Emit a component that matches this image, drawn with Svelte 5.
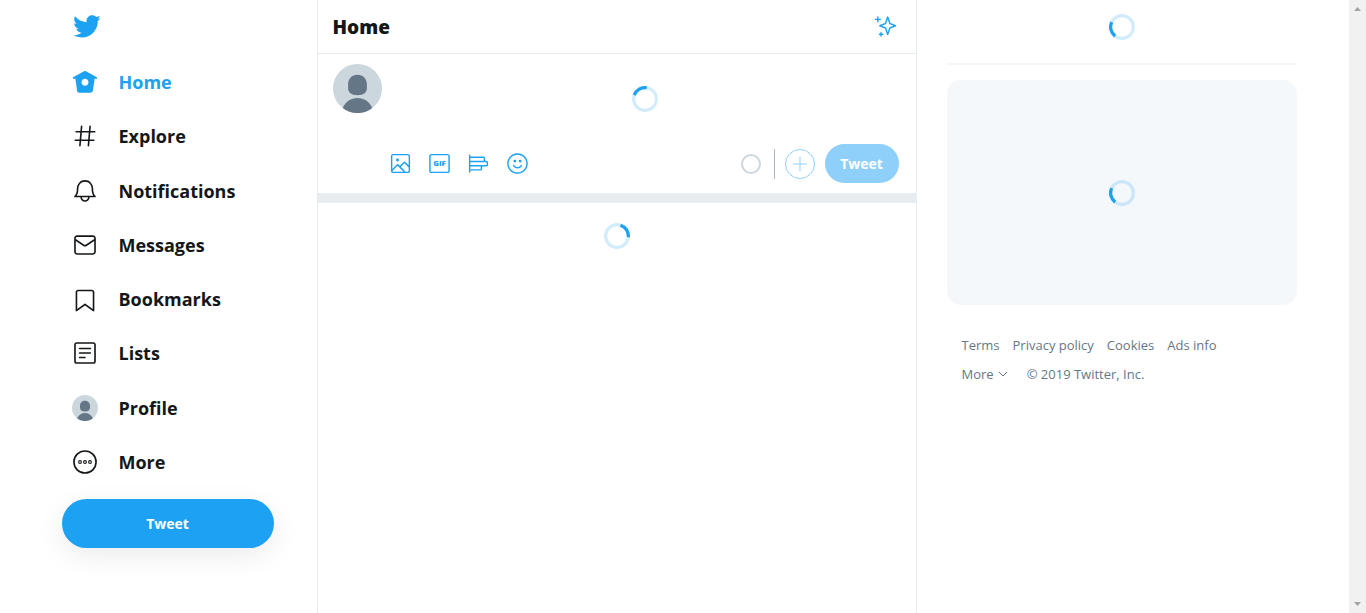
<script>
  const nav = [
    { label: 'Home', active: true, paths: ['M22.58 7.35L12.475 1.897c-.297-.16-.654-.16-.95 0L1.425 7.35c-.486.264-.667.87-.405 1.356.18.335.525.525.88.525.16 0 .324-.038.475-.12l.734-.396 1.59 11.25c.216 1.214 1.31 2.062 2.66 2.062h9.282c1.35 0 2.444-.848 2.662-2.088l1.588-11.225.737.398c.485.263 1.092.082 1.354-.404.263-.486.08-1.093-.404-1.355zM12 15.435c-1.795 0-3.25-1.455-3.25-3.25s1.455-3.25 3.25-3.25 3.25 1.455 3.25 3.25-1.455 3.25-3.25 3.25z'] },
    { label: 'Explore', paths: ['M21 7.337h-3.93l.372-4.272c.036-.412-.27-.775-.682-.812-.417-.03-.776.27-.812.683l-.383 4.4h-6.32l.37-4.27c.037-.413-.27-.776-.68-.813-.42-.03-.777.27-.813.683l-.382 4.4H3.782c-.414 0-.75.337-.75.75s.336.75.75.75H7.61l-.55 6.327H3c-.414 0-.75.336-.75.75s.336.75.75.75h3.93l-.372 4.272c-.036.412.27.775.682.812l.066.003c.385 0 .712-.295.746-.686l.383-4.4h6.32l-.37 4.27c-.036.413.27.776.682.813l.066.003c.385 0 .712-.295.746-.686l.382-4.4h3.957c.413 0 .75-.337.75-.75s-.337-.75-.75-.75H16.39l.55-6.327H21c.414 0 .75-.336.75-.75s-.336-.75-.75-.75zm-6.115 7.826h-6.32l.55-6.326h6.32l-.55 6.326z'] },
    { label: 'Notifications', paths: ['M21.697 16.468c-.02-.016-2.14-1.64-2.103-6.03.02-2.532-.812-4.782-2.347-6.335C15.872 2.71 14.01 1.94 12.005 1.93h-.013c-2.004.01-3.866.78-5.242 2.174-1.534 1.553-2.368 3.802-2.346 6.334.037 4.33-2.02 5.967-2.102 6.03-.26.193-.366.53-.265.838.102.308.39.515.712.515h4.92c.102 2.31 1.997 4.16 4.33 4.16s4.226-1.85 4.327-4.16h4.922c.322 0 .61-.206.71-.514.103-.307-.003-.645-.263-.838zM12 20.478c-1.505 0-2.73-1.177-2.828-2.658h5.656c-.1 1.48-1.323 2.66-2.828 2.66zM4.38 16.32c.74-1.132 1.548-3.028 1.524-5.896-.018-2.16.644-3.982 1.913-5.267C8.91 4.05 10.397 3.437 12 3.43c1.603.008 3.087.62 4.18 1.728 1.27 1.285 1.933 3.106 1.915 5.267-.024 2.868.785 4.765 1.525 5.896H4.38z'] },
    { label: 'Messages', paths: ['M19.25 3.018H4.75C3.233 3.018 2 4.252 2 5.77v12.495c0 1.518 1.233 2.753 2.75 2.753h14.5c1.517 0 2.75-1.235 2.75-2.753V5.77c0-1.518-1.233-2.752-2.75-2.752zm-14.5 1.5h14.5c.69 0 1.25.56 1.25 1.25v.714l-8.05 5.367c-.273.18-.626.182-.9-.002L3.5 6.482v-.714c0-.69.56-1.25 1.25-1.25zm14.5 14.998H4.75c-.69 0-1.25-.56-1.25-1.25V8.24l7.24 4.83c.383.256.822.384 1.26.384.44 0 .877-.128 1.26-.383l7.24-4.83v10.022c0 .69-.56 1.25-1.25 1.25z'] },
    { label: 'Bookmarks', paths: ['M19.9 23.5c-.157 0-.312-.05-.442-.144L12 17.928l-7.458 5.43c-.228.164-.53.19-.782.06-.25-.127-.41-.385-.41-.667V5.6c0-1.24 1.01-2.25 2.25-2.25h12.798c1.24 0 2.25 1.01 2.25 2.25v17.15c0 .282-.158.54-.41.668-.106.055-.223.082-.34.082zM12 16.25c.155 0 .31.048.44.144l6.71 4.883V5.6c0-.412-.337-.75-.75-.75H5.6c-.413 0-.75.338-.75.75v15.677l6.71-4.883c.13-.096.285-.144.44-.144z'] },
    { label: 'Lists', paths: ['M19.75 22H4.25C3.01 22 2 20.99 2 19.75V4.25C2 3.01 3.01 2 4.25 2h15.5C20.99 2 22 3.01 22 4.25v15.5c0 1.24-1.01 2.25-2.25 2.25zM4.25 3.5c-.414 0-.75.337-.75.75v15.5c0 .413.336.75.75.75h15.5c.414 0 .75-.337.75-.75V4.25c0-.413-.336-.75-.75-.75H4.25z', 'M17 8.64H7c-.414 0-.75-.337-.75-.75s.336-.75.75-.75h10c.414 0 .75.335.75.75s-.336.75-.75.75zm0 4.11H7c-.414 0-.75-.336-.75-.75s.336-.75.75-.75h10c.414 0 .75.336.75.75s-.336.75-.75.75zm-5 4.11H7c-.414 0-.75-.335-.75-.75s.336-.75.75-.75h5c.414 0 .75.337.75.75s-.336.75-.75.75z'] },
    { label: 'Profile', avatar: true },
    { label: 'More', more: true },
  ];

  const tools = [
    { name: 'Add photos', dots: [[8.868, 8.309, 1.542]], paths: ['M19.75 2H4.25C3.01 2 2 3.01 2 4.25v15.5C2 20.99 3.01 22 4.25 22h15.5c1.24 0 2.25-1.01 2.25-2.25V4.25C22 3.01 20.99 2 19.75 2zM4.25 3.5h15.5c.413 0 .75.337.75.75v9.676l-3.858-3.858c-.14-.14-.33-.22-.53-.22h-.003c-.2 0-.393.08-.532.224l-4.317 4.384-1.813-1.806c-.14-.14-.33-.22-.53-.22-.193-.03-.395.08-.535.227L3.5 17.642V4.25c0-.413.337-.75.75-.75zm-.744 16.28l5.418-5.534 6.282 6.254H4.25c-.402 0-.727-.322-.744-.72zm16.244.72h-2.42l-5.007-4.987 3.792-3.85 4.385 4.384v3.703c0 .413-.337.75-.75.75z'] },
    { name: 'Add a GIF', text: 'GIF', dots: [], paths: ['M20.5 2.02h-17c-1.24 0-2.25 1.007-2.25 2.247v15.507c0 1.238 1.01 2.246 2.25 2.246h17c1.24 0 2.25-1.008 2.25-2.246V4.267c0-1.24-1.01-2.247-2.25-2.247zm.75 17.754c0 .41-.336.746-.75.746h-17c-.414 0-.75-.336-.75-.746V4.267c0-.412.336-.747.75-.747h17c.414 0 .75.335.75.747v15.507z'] },
    { name: 'Add poll', dots: [], paths: ['M20.222 9.16h-1.334c.015-.09.028-.182.028-.277V6.57c0-.98-.797-1.777-1.778-1.777H3.5V3.358c0-.414-.336-.75-.75-.75s-.75.336-.75.75V20.83c0 .415.336.75.75.75s.75-.335.75-.75v-1.434h10.556c.98 0 1.778-.797 1.778-1.777v-2.313c0-.095-.014-.187-.028-.278h4.417c.98 0 1.778-.798 1.778-1.778v-2.31c0-.983-.797-1.78-1.778-1.78zM17.14 6.293c.152 0 .277.124.277.277v2.31c0 .154-.125.28-.278.28H3.5V6.29h13.64zm-2.807 9.014v2.312c0 .153-.125.277-.278.277H3.5v-2.868h10.556c.153 0 .277.126.277.28zM20.5 13.25c0 .153-.125.277-.278.277H3.5V10.66h16.722c.153 0 .278.124.278.277v2.313z'] },
    { name: 'Add emoji', dots: [[14.738, 9.458, 1.478], [9.262, 9.458, 1.478]], paths: ['M12 22.75C6.072 22.75 1.25 17.928 1.25 12S6.072 1.25 12 1.25 22.75 6.072 22.75 12 17.928 22.75 12 22.75zm0-20C6.9 2.75 2.75 6.9 2.75 12S6.9 21.25 12 21.25s9.25-4.15 9.25-9.25S17.1 2.75 12 2.75z', 'M12 17.115c-1.892 0-3.633-.95-4.656-2.544-.224-.348-.123-.81.226-1.035.348-.226.812-.124 1.036.226.747 1.162 2.016 1.855 3.395 1.855s2.648-.693 3.396-1.854c.224-.35.688-.45 1.036-.225.35.224.45.688.226 1.036-1.025 1.594-2.766 2.545-4.658 2.545z'] },
  ];

  const links = ['Terms', 'Privacy policy', 'Cookies', 'Ads info'];
</script>

{#snippet spinner(angle)}
  <svg class="spinner" viewBox="0 0 32 32" role="progressbar" aria-label="Loading">
    <circle cx="16" cy="16" r="14" opacity="0.2" />
    <circle cx="16" cy="16" r="14" stroke-dasharray="19 100" transform="rotate({angle} 16 16)" />
  </svg>
{/snippet}

{#snippet avatar()}
  <svg class="avatar" viewBox="0 0 48 48" aria-hidden="true">
    <circle cx="24" cy="24" r="24" fill="#ccd6dd" />
    <path d="M24 10.500c5.500 0 9.200 4 9.200 9.500v3.500c0 4.500-3 7-9.200 7s-9.200-2.500-9.200-7V20c0-5.500 3.700-9.500 9.200-9.500zM24 33.200c6.500 0 11.700 3.500 14.500 10A24 24 0 0 1 9.500 43.200c2.800-6.500 8-10 14.500-10z" fill="#657786" />
  </svg>
{/snippet}

<div class="page">
  <div class="shell">
    <header>
      <a class="logo" href="#home" aria-label="Twitter">
        <svg viewBox="0 0 24 24"><path d="M23.643 4.937c-.835.37-1.732.62-2.675.733.962-.576 1.7-1.49 2.048-2.578-.9.534-1.897.922-2.958 1.13-.85-.904-2.06-1.47-3.4-1.47-2.572 0-4.658 2.086-4.658 4.66 0 .364.042.718.12 1.06-3.873-.195-7.304-2.05-9.602-4.868-.4.69-.63 1.49-.63 2.342 0 1.616.823 3.043 2.072 3.878-.764-.025-1.482-.234-2.11-.583v.06c0 2.257 1.605 4.14 3.737 4.568-.392.106-.803.162-1.227.162-.3 0-.593-.028-.877-.082.593 1.85 2.313 3.198 4.352 3.234-1.595 1.25-3.604 1.995-5.786 1.995-.376 0-.747-.022-1.112-.065 2.062 1.323 4.51 2.093 7.14 2.093 8.57 0 13.255-7.098 13.255-13.254 0-.2-.005-.402-.014-.602.91-.658 1.7-1.477 2.323-2.41z" /></svg>
      </a>
      <nav>
        {#each nav as item}
          <a href="#{item.label.toLowerCase()}" class:active={item.active}>
            {#if item.avatar}
              {@render avatar()}
            {:else if item.more}
              <svg viewBox="0 0 24 24" aria-hidden="true">
                <circle class="line" cx="12" cy="12" r="10.2" />
                <circle class="line thin" cx="7.4" cy="12" r="1.3" />
                <circle class="line thin" cx="12" cy="12" r="1.3" />
                <circle class="line thin" cx="16.6" cy="12" r="1.3" />
              </svg>
            {:else}
              <svg viewBox="0 0 24 24" aria-hidden="true">
                {#each item.paths as d}<path {d} />{/each}
              </svg>
            {/if}
            <span>{item.label}</span>
          </a>
        {/each}
      </nav>
      <button class="tweet wide">Tweet</button>
    </header>

    <main>
      <div class="title">
        <h1>Home</h1>
        <button class="sparkle" aria-label="Top Tweets">
          <svg viewBox="0 0 24 24"><path d="M22.772 10.506l-5.618-2.192-2.16-6.5c-.102-.307-.39-.514-.712-.514s-.61.207-.712.513l-2.16 6.5-5.62 2.192c-.287.112-.477.39-.477.7s.19.585.478.698l5.62 2.192 2.16 6.5c.102.306.39.513.712.513s.61-.207.712-.513l2.16-6.5 5.62-2.192c.287-.112.477-.39.477-.7s-.19-.585-.478-.697zm-6.49 2.32c-.208.08-.37.25-.44.46l-1.56 4.695-1.56-4.693c-.07-.21-.23-.38-.438-.462l-4.155-1.62 4.154-1.622c.208-.08.37-.25.44-.462l1.56-4.693 1.56 4.694c.07.212.23.382.438.463l4.155 1.62-4.155 1.622zM6.663 3.812h-1.88V2.05c0-.414-.337-.75-.75-.75s-.75.336-.75.75v1.762H1.5c-.414 0-.75.336-.75.75s.336.75.75.75h1.782v1.762c0 .414.336.75.75.75s.75-.336.75-.75V5.312h1.88c.415 0 .75-.336.75-.75s-.335-.75-.75-.75zm2.535 15.622h-1.1v-1.016c0-.414-.335-.75-.75-.75s-.75.336-.75.75v1.016H5.57c-.414 0-.75.336-.75.75s.336.75.75.75H6.6v1.016c0 .414.335.75.75.75s.75-.336.75-.75v-1.016h1.098c.414 0 .75-.336.75-.75s-.336-.75-.75-.75z" /></svg>
        </button>
      </div>

      <section class="composer">
        {@render avatar()}
        <div class="editor">
          <div class="draft">{@render spinner(200)}</div>
          <div class="toolbar">
            {#each tools as tool}
              <button class="tool" aria-label={tool.name}>
                <svg viewBox="0 0 24 24">
                  {#each tool.paths as d}<path {d} />{/each}
                  {#each tool.dots as [cx, cy, r]}<circle {cx} {cy} {r} />{/each}
                  {#if tool.text}<text x="12" y="15" text-anchor="middle">{tool.text}</text>{/if}
                </svg>
              </button>
            {/each}
            <span class="count"></span>
            <span class="divider"></span>
            <button class="add" aria-label="Add Tweet" disabled>
              <svg viewBox="0 0 16 16"><path d="M8 1v14M1 8h14" /></svg>
            </button>
            <button class="tweet" disabled>Tweet</button>
          </div>
        </div>
      </section>

      <div class="band"></div>
      <section class="feed">{@render spinner(-72)}</section>
    </main>

    <aside>
      <div class="search">{@render spinner(127)}</div>
      <div class="trends">{@render spinner(127)}</div>
      <footer>
        <div class="links">
          {#each links as link}<a href="#{link.toLowerCase().replace(' ', '-')}">{link}</a>{/each}
        </div>
        <div class="links">
          <button class="more">More
            <svg viewBox="0 0 10 6" aria-hidden="true"><path d="M1 1l4 4 4-4" /></svg>
          </button>
          <span>© 2019 Twitter, Inc.</span>
        </div>
      </footer>
    </aside>
  </div>

  <div class="scrollbar" aria-hidden="true">
    <svg viewBox="0 0 7 4"><path d="M0 4h7L3.500 0z" /></svg>
    <svg viewBox="0 0 7 4"><path d="M0 0h7L3.500 4z" /></svg>
  </div>
</div>

<style>
  :global(body) {
    margin: 0;
    background: #fff;
  }

  .page {
    display: flex;
    min-height: 100vh;
    color: #14171a;
    font-family: 'Open Sans', 'Noto Sans', sans-serif;
    font-size: 14px;
  }

  .page *,
  .page {
    box-sizing: border-box;
  }

  svg {
    display: block;
    flex: none;
    fill: currentColor;
  }

  a {
    color: inherit;
    text-decoration: none;
  }

  button {
    padding: 0;
    border: 0;
    background: none;
    color: inherit;
    font: inherit;
  }

  .shell {
    flex: 1;
    display: flex;
    justify-content: center;
    padding-right: 11px;
  }

  header {
    flex: 0 1 275px;
    display: flex;
    flex-direction: column;
    padding: 0 43px 0 20px;
  }

  .logo {
    display: flex;
    align-items: center;
    height: 53px;
    padding-left: 10px;
    color: #1da1f2;
  }

  .logo svg {
    width: 29px;
    height: 29px;
  }

  nav {
    display: grid;
    grid-auto-rows: 1fr;
    min-height: 434px;
    margin-top: 2px;
  }

  nav a {
    display: flex;
    align-items: center;
    gap: 21px;
    padding-left: 10px;
    font-size: 18px;
    font-weight: 700;
    line-height: 26px;
  }

  nav a.active {
    color: #1da1f2;
  }

  nav svg,
  nav .avatar {
    width: 26px;
    height: 26px;
  }

  .line {
    fill: none;
    stroke: currentColor;
    stroke-width: 1.5;
  }

  .thin {
    stroke-width: 1;
  }

  .tweet {
    height: 39px;
    border-radius: 25px;
    background: #1da1f2;
    color: #fff;
    font-weight: 700;
  }

  .tweet:disabled {
    width: 74px;
    background: #8ed0f9;
  }

  .wide {
    height: 49px;
    margin-top: 10px;
    box-shadow: 0 8px 28px rgba(0, 0, 0, 0.08);
  }

  main {
    flex: 0 1 600px;
    border: solid #e6ecf0;
    border-width: 0 1px;
  }

  .title {
    display: flex;
    align-items: center;
    justify-content: space-between;
    height: 54px;
    padding: 0 19px 0 15px;
    border-bottom: 1px solid #e6ecf0;
  }

  h1 {
    margin: 0;
    font-size: 19px;
    font-weight: 800;
    line-height: 26px;
  }

  .sparkle {
    color: #1da1f2;
  }

  .sparkle svg,
  .tool svg {
    width: 23px;
    height: 23px;
  }

  .composer {
    display: flex;
    gap: 9px;
    padding: 10px 17px 10px 15px;
  }

  .avatar {
    width: 49px;
    height: 49px;
  }

  .editor {
    flex: 1;
    min-width: 0;
  }

  .draft {
    display: grid;
    place-items: center;
    height: 70px;
    margin-bottom: 10px;
  }

  .spinner {
    width: 26px;
    height: 26px;
    fill: none;
    stroke: #1da1f2;
    stroke-width: 4;
  }

  .toolbar {
    display: flex;
    align-items: center;
    margin-left: -10px;
  }

  .tool {
    display: grid;
    place-items: center;
    width: 39px;
    height: 39px;
    color: #1da1f2;
  }

  .tool text {
    font-size: 8px;
    font-weight: 800;
  }

  .count {
    width: 20px;
    height: 20px;
    margin-left: auto;
    border: 2px solid #ccd6dd;
    border-radius: 50%;
  }

  .divider {
    width: 1px;
    height: 30px;
    margin: 0 10px 0 13px;
    background: #aab8c2;
  }

  .add {
    display: grid;
    place-items: center;
    width: 30px;
    height: 30px;
    margin-right: 10px;
    border: 1px solid #8ed0f9;
    border-radius: 50%;
    color: #8ed0f9;
  }

  .add svg {
    width: 16px;
    height: 16px;
    stroke: currentColor;
  }

  .band {
    height: 10px;
    background: #e6ecf0;
  }

  .feed {
    display: grid;
    justify-items: center;
    padding: 20px;
  }

  aside {
    flex: 0 1 350px;
    margin-left: 30px;
  }

  .search {
    display: grid;
    justify-items: center;
    height: 65px;
    padding-top: 14px;
    border-bottom: 2px solid #f5f8fa;
  }

  .trends {
    display: grid;
    place-items: center;
    height: 225px;
    margin-top: 15px;
    border-radius: 14px;
    background: #f5f8fa;
  }

  footer {
    display: grid;
    gap: 9px;
    padding: 30px 15px;
    color: #657786;
    font-size: 13px;
    line-height: 20px;
  }

  .links {
    display: flex;
    flex-wrap: wrap;
    gap: 13px;
  }

  .more {
    display: flex;
    align-items: center;
    gap: 4px;
    margin-right: 6px;
  }

  .more svg {
    width: 10px;
    height: 6px;
    fill: none;
    stroke: currentColor;
  }

  .scrollbar {
    display: flex;
    flex: none;
    flex-direction: column;
    align-items: center;
    justify-content: space-between;
    width: 17px;
    padding: 7px 0;
    background: #f1f1f1;
    color: #a3a3a3;
  }

  .scrollbar svg {
    width: 7px;
    height: 4px;
  }
</style>
